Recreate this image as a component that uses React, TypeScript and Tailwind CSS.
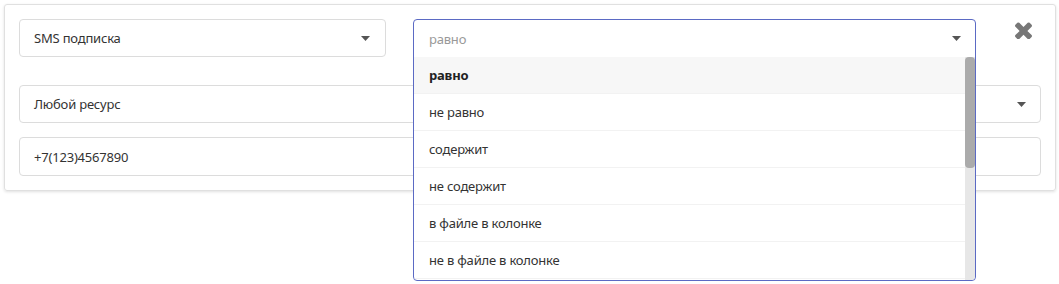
import React from "react";

const Caret = () => (
  <svg width="9" height="5" viewBox="0 0 9 5" className="shrink-0">
    <path d="M0 0 H9 L4.5 5 Z" fill="#555" />
  </svg>
);

const TimesIcon = () => (
  <svg width="17" height="17" viewBox="110 262 1188 1188">
    <path
      fill="#777"
      d="M1298 1322q0 40-28 68l-136 136q-28 28-68 28t-68-28l-294-294-294 294q-28 28-68 28t-68-28l-136-136q-28-28-28-68t28-68l294-294-294-294q-28-28-28-68t28-68l136-136q28-28 68-28t68 28l294 294 294-294q28-28 68-28t68 28l136 136q28 28 28 68t-28 68l-294 294 294 294q28 28 28 68z"
      transform="translate(0 -76)"
    />
  </svg>
);

const options = [
  "равно",
  "не равно",
  "содержит",
  "не содержит",
  "в файле в колонке",
  "не в файле в колонке",
];

export default function App() {
  return (
    <div
      className="w-[1059px] h-[284px] bg-white p-[4px] text-[13px] tracking-[-0.2px] text-[#333]"
      style={{ fontFamily: '"Noto Sans", "DejaVu Sans", sans-serif' }}
    >
      <div className="w-[1052px] border border-[#e0e0e0] rounded-[3px] shadow-[0_1px_3px_rgba(0,0,0,0.12)] pt-[14px] pb-[14px] pl-[14px] pr-[14px] flex flex-col">
        {/* row 1 */}
        <div className="flex items-start h-[38px]">
          <div className="w-[367px] h-[38px] border border-[#dcdcdc] rounded-[4px] flex items-center justify-between pl-[14px] pr-[15px]">
            <span className="pt-[2px]">SMS подписка</span>
            <Caret />
          </div>
          <div className="ml-[27px] w-[563px] h-[38px] relative z-10">
            <div className="w-[563px] bg-white border border-[#5b6ac4] rounded-[4px] flex flex-col">
              <div className="h-[37px] flex items-center justify-between pl-[15px] pr-[14px]">
                <span className="text-[#999] pt-[2px]">равно</span>
                <Caret />
              </div>
              <div className="flex h-[223px] overflow-hidden rounded-b-[4px]">
                <div className="flex-1 flex flex-col">
                  {options.map((o, i) => (
                    <div
                      key={o}
                      className={
                        "h-[37px] shrink-0 flex items-center pl-[15px] pt-[2px] border-b border-[#f2f2f2] " +
                        (i === 0 ? "bg-[#f7f7f7] font-bold text-[#222]" : "")
                      }
                    >
                      {o}
                    </div>
                  ))}
                </div>
                <div className="w-[10px] bg-[#e7e7e7] flex flex-col">
                  <div className="h-[111px] bg-[#ababab] rounded-[4px]" />
                </div>
              </div>
            </div>
          </div>
          <div className="flex-1 flex justify-start pt-[3px] pl-[39px]">
            <TimesIcon />
          </div>
        </div>
        {/* row 2 */}
        <div className="mt-[28px] h-[38px] border border-[#dcdcdc] rounded-[4px] flex items-center justify-between pl-[14px] pr-[14px]">
          <span className="pt-[2px]">Любой ресурс</span>
          <Caret />
        </div>
        {/* row 3 */}
        <div className="mt-[14px] h-[39px] border border-[#dcdcdc] rounded-[4px] flex items-center pl-[14px]">
          <span className="pt-[2px]">+7(123)4567890</span>
        </div>
      </div>
    </div>
  );
}
